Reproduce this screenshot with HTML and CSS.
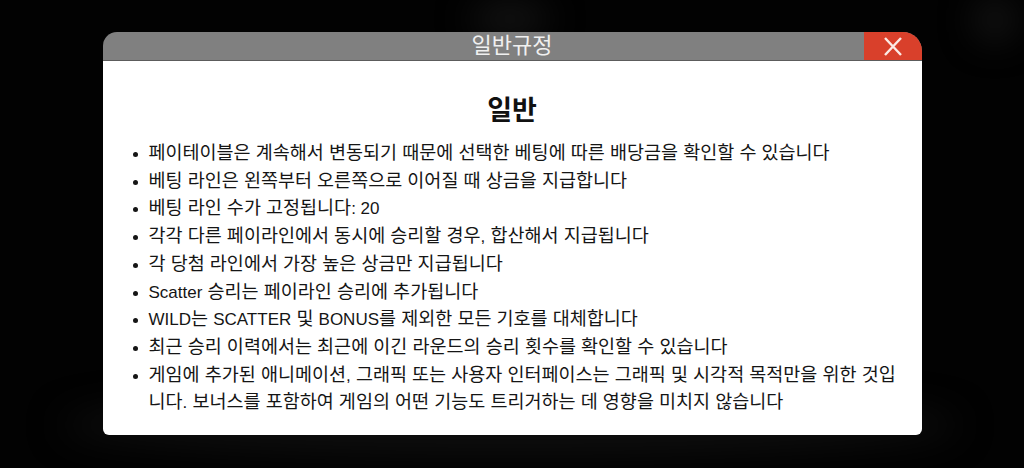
FILE: index.html
```
<!DOCTYPE html>
<html lang="ko">
<head>
<meta charset="utf-8">
<link rel="stylesheet" href="styles.css">
</head>
<body>
<div class="stage">
  <div class="glow glow-a"></div>
  <div class="glow glow-b"></div>
  <div class="glow glow-c"></div>
  <div class="modal">
    <div class="modal-head">
      <div class="modal-title">일반규정</div>
      <div class="modal-close">
        <svg width="18" height="19" viewBox="0 0 18 19"><path d="M1 1 L17 18 M17 1 L1 18" stroke="#fbe9e4" stroke-width="2.4" fill="none"/></svg>
      </div>
    </div>
    <div class="modal-body">
      <h2 class="section-title">일반</h2>
      <ul class="rules">
        <li>페이테이블은 계속해서 변동되기 때문에 선택한 베팅에 따른 배당금을 확인할 수 있습니다</li>
        <li>베팅 라인은 왼쪽부터 오른쪽으로 이어질 때 상금을 지급합니다</li>
        <li>베팅 라인 수가 고정됩니다<span class="lat">: 20</span></li>
        <li>각각 다른 페이라인에서 동시에 승리할 경우<span class="lat">,</span> 합산해서 지급됩니다</li>
        <li>각 당첨 라인에서 가장 높은 상금만 지급됩니다</li>
        <li><span class="lat">Scatter</span> 승리는 페이라인 승리에 추가됩니다</li>
        <li><span class="lat">WILD</span>는 <span class="lat">SCATTER</span> 및 <span class="lat">BONUS</span>를 제외한 모든 기호를 대체합니다</li>
        <li>최근 승리 이력에서는 최근에 이긴 라운드의 승리 횟수를 확인할 수 있습니다</li>
        <li>게임에 추가된 애니메이션<span class="lat">,</span> 그래픽 또는 사용자 인터페이스는 그래픽 및 시각적 목적만을 위한 것입니다<span class="lat">.</span> 보너스를 포함하여 게임의 어떤 기능도 트리거하는 데 영향을 미치지 않습니다</li>
      </ul>
    </div>
  </div>
</div>
</body>
</html>
```
FILE: styles.css
```
html, body {
  margin: 0;
  padding: 0;
  background: #000;
}
.stage {
  position: relative;
  width: 1024px;
  height: 468px;
  overflow: hidden;
  background: #020202;
  padding-top: 32px;
  box-sizing: border-box;
}
.glow {
  position: absolute;
  border-radius: 50%;
  filter: blur(18px);
  background: rgba(40, 40, 40, 0.55);
}
.glow-a { left: 470px; top: 4px; width: 80px; height: 30px; }
.glow-b { left: 975px; top: 0px; width: 40px; height: 40px; }
.glow-c { left: 60px; top: 395px; width: 900px; height: 60px; background: rgba(22,22,22,0.6); }
.modal {
  position: relative;
  width: 819px;
  margin: 0 auto;
  font-family: "Liberation Sans", "Noto Sans CJK KR", sans-serif;
}
.modal-head {
  display: flex;
  height: 28px;
  background: #808080;
  border-radius: 14px 19px 0 0;
  border-bottom: 1px solid #5c5c5c;
  overflow: hidden;
}
.modal-title {
  flex: 1;
  text-align: center;
  color: #f0f0f0;
  font-size: 22px;
  line-height: 28px;
  padding-left: 58px;
}
.modal-close {
  width: 58px;
  background: #d9402b;
  display: flex;
  align-items: center;
  justify-content: center;
}
.modal-body {
  background: #fff;
  border-radius: 0 0 6px 6px;
  padding: 34px 19px 19px 46px;
}
.section-title {
  margin: 0 0 12px 0;
  text-align: center;
  font-size: 27px;
  line-height: 32px;
  font-weight: bold;
  color: #111;
  padding-right: 27px;
}
.rules {
  margin: 0;
  padding: 0;
  list-style: disc outside;
  color: #151515;
  font-size: 18.5px;
  line-height: 27.7px;
}
.rules li::marker {
  font-size: 15px;
}
.lat {
  font-size: 17px;
  line-height: 1;
}
```
